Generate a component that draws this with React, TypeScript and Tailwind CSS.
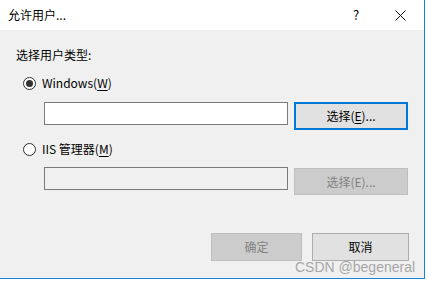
import React from 'react';

const font = { fontFamily: '"Noto Sans CJK SC", "Noto Sans", sans-serif' };

const Radio: React.FC<{ checked?: boolean }> = ({ checked }) => (
  <span className="w-[13px] h-[13px] rounded-full border border-[#333333] bg-white flex items-center justify-center">
    {checked && <span className="w-[7px] h-[7px] rounded-full bg-[#333333]" />}
  </span>
);

export default function App() {
  return (
    <div className="w-[428px] h-[282px] bg-white overflow-hidden text-[12px] text-black" style={font}>
      <div className="w-[425px] h-[279px] bg-[#f0f0f0] border-r border-b border-[#1883d7] relative">
        {/* Title bar */}
        <div className="h-[30px] bg-white flex items-center">
          <span className="pl-[8px] leading-[16px]">允许用户...</span>
          <span className="ml-auto w-[20px] text-center text-[13px] mr-[27px]">?</span>
          <span className="w-[14px] flex items-center justify-center mr-[17px]">
            <svg width="11" height="11" viewBox="0 0 11 11">
              <path d="M0.5 0.5 L10.5 10.5 M10.5 0.5 L0.5 10.5" stroke="#111" strokeWidth="1" />
            </svg>
          </span>
        </div>

        {/* Body */}
        <div className="pl-[16px]">
          <div className="mt-[17px] leading-[16px]">选择用户类型:</div>

          <div className="mt-[12px] ml-[7px] flex items-center gap-[6px] h-[16px]">
            <Radio checked />
            <span className="leading-[16px]">
              Windows(<span className="underline underline-offset-2">W</span>)
            </span>
          </div>

          <div className="mt-[11px] ml-[28px] flex items-start gap-[6px]">
            <div className="w-[244px] h-[23px] bg-white border border-[#7a7a7a]" />
            <div className="w-[114px] h-[28px] bg-[#e1e1e1] border-2 border-[#0078d7] flex items-center justify-center">
              选择(<span className="underline underline-offset-2">E</span>)...
            </div>
          </div>

          <div className="mt-[11px] ml-[7px] flex items-center gap-[6px] h-[16px]">
            <Radio />
            <span className="leading-[16px]">
              IIS 管理器(<span className="underline underline-offset-2">M</span>)
            </span>
          </div>

          <div className="mt-[10px] ml-[28px] flex items-start gap-[6px]">
            <div className="w-[244px] h-[23px] bg-[#f0f0f0] border border-[#7a7a7a]" />
            <div className="mt-[1px] w-[114px] h-[27px] bg-[#cccccc] border border-[#bfbfbf] text-[#838383] flex items-center justify-center">
              选择(E)...
            </div>
          </div>

          <div className="mt-[38px] flex justify-end gap-[10px] pr-[15px]">
            <div className="w-[91px] h-[28px] bg-[#cccccc] border border-[#bfbfbf] text-[#838383] flex items-center justify-center">
              确定
            </div>
            <div className="w-[97px] h-[28px] bg-[#e1e1e1] border border-[#adadad] flex items-center justify-center">
              取消
            </div>
          </div>
        </div>

        {/* Watermark */}
        <span
          className="absolute left-[295px] top-[259px] text-[14px] leading-[16px] text-[#a0a0a0] opacity-90"
          style={{ fontFamily: '"Liberation Sans", Arial, sans-serif' }}
        >
          CSDN @begeneral
        </span>
      </div>
    </div>
  );
}
